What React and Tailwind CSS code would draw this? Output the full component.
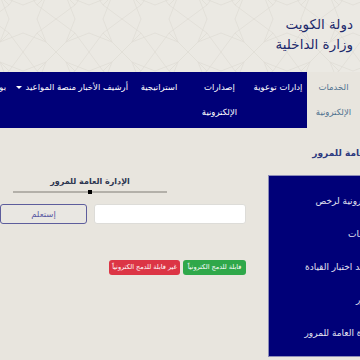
import React from 'react';

const navItems = [
  { label: 'إدارات توعوية', w: 'w-[58px]' },
  { label: ['إصدارات', 'الإلكترونية'], w: 'w-[59px]' },
  { label: 'استراتيجية', w: 'w-[62px]' },
  { label: 'أرشيف الأخبار', w: 'w-[49px]' },
];

const sideLinks = [
  'الإلكترونية لرخص',
  'مخالفات',
  'مواعيد اختبار القيادة',
  'المرور',
  'الإدارة العامة للمرور',
];

function HeaderPattern() {
  return (
    <svg className="absolute inset-0 h-full w-full" aria-hidden="true">
      <defs>
        <pattern id="geo" width="66" height="66" patternUnits="userSpaceOnUse" x="-10" y="-14">
          <g fill="none" stroke="#e0ddd6" strokeWidth="0.8">
            <path d="M33 0 L47 19 L66 33 L47 47 L33 66 L19 47 L0 33 L19 19 Z" />
            <path d="M10 10 L33 19 L56 10 L47 33 L56 56 L33 47 L10 56 L19 33 Z" />
            <path d="M0 0 L19 19 M66 0 L47 19 M0 66 L19 47 M66 66 L47 47" />
          </g>
        </pattern>
      </defs>
      <rect width="100%" height="100%" fill="url(#geo)" />
    </svg>
  );
}

export default function App() {
  return (
    <div
      className="w-[360px] h-[360px] overflow-hidden bg-[#e8e5de]"
      style={{ fontFamily: '"DejaVu Sans", "Noto Sans", sans-serif' }}
    >
      {/* header */}
      <header className="relative h-[72px] bg-[#ebe9e3]">
        <HeaderPattern />
        <div dir="rtl" className="relative pr-[7px] pt-[14px] text-[13.5px] leading-[20px] text-[#1d2a6c]">
          <div>دولة الكويت</div>
          <div>وزارة الداخلية</div>
        </div>
      </header>

      {/* main nav */}
      <nav dir="rtl" className="flex h-[56px] overflow-hidden bg-[#000078] text-[8.5px] leading-[25px] text-white">
        <div className="w-[53px] shrink-0 bg-[#e8e5de] pt-[3px] text-center text-[#4f7290]">
          <div>الخدمات</div>
          <div>الإلكترونية</div>
        </div>
        {navItems.map((item, i) => (
          <div key={i} className={`${item.w} shrink-0 whitespace-nowrap pt-[3px] text-center`}>
            {Array.isArray(item.label) ? item.label.map((l) => <div key={l}>{l}</div>) : item.label}
          </div>
        ))}
        <div className="flex w-[55px] shrink-0 items-start gap-[4px] whitespace-nowrap pr-[3px] pt-[3px]">
          <span>منصة المواعيد</span>
          <span className="mt-[11px] h-0 w-0 border-x-[3px] border-t-[3px] border-x-transparent border-t-white" />
        </div>
        <div className="shrink-0 whitespace-nowrap pr-[18px] pt-[3px]">بوابة الخدمات</div>
      </nav>

      {/* body */}
      <div dir="ltr" className="overflow-hidden">
        <div dir="rtl" className="w-[390px]">
          <div className="-mr-[12px] pt-[18px] text-[9px] font-bold leading-[14px] text-[#2d3a80]">
            الإدارة العامة للمرور
          </div>
          <div className="mt-[15px] flex items-start gap-[22px]">
            <ul className="h-[182px] w-[122px] shrink-0 border border-[#8d8db8] bg-[#000078] pr-[9px] pt-[9px] text-[9px] leading-[33px] text-[#e4e4f2]">
              {sideLinks.map((s) => (
                <li key={s} className="whitespace-nowrap">{s}</li>
              ))}
            </ul>

            <div dir="ltr" className="w-[246px] shrink-0">
              <div className="ml-[13px] w-[154px]">
                <div dir="rtl" className="text-center text-[8px] font-bold leading-[14px] text-[#2c3550]">
                  الإدارة العامة للمرور
                </div>
                <div className="relative mt-[2px] h-[2px] bg-[#b3b0a9]">
                  <span className="absolute left-[75px] top-[-1px] h-[4px] w-[4px] bg-black" />
                </div>
              </div>
              <div className="mt-[11px] flex h-[20px] gap-[7px]">
                <button className="w-[87px] rounded-[3px] border border-[#5d5d9c] bg-[#e9e7e2] text-[8.5px] text-[#5b5ba3]">
                  إستعلم
                </button>
                <input
                  dir="rtl"
                  className="w-[152px] rounded-[3px] border border-[#dddcd8] bg-white outline-none"
                />
              </div>
              <div dir="rtl" className="mt-[36px] flex h-[15px] gap-[3px] text-[6.5px] leading-[15px] text-white">
                <span className="w-[63px] whitespace-nowrap rounded-[3px] bg-[#2fa84a] text-center">
                  قابلة للدمج الكترونياً
                </span>
                <span className="w-[71px] whitespace-nowrap rounded-[3px] bg-[#dc3545] text-center">
                  غير قابلة للدمج الكترونياً
                </span>
              </div>
            </div>
          </div>
        </div>
      </div>
    </div>
  );
}
